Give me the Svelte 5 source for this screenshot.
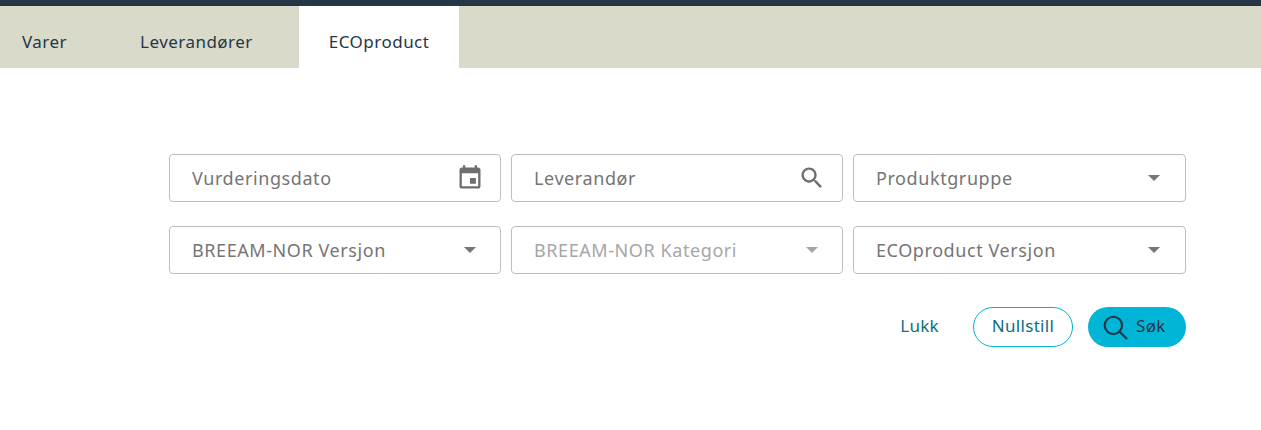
<script>
  const tabs = [
    { label: 'Varer' },
    { label: 'Leverandører' },
    { label: 'ECOproduct', active: true }
  ];
  const fields = [
    { label: 'Vurderingsdato', icon: 'date' },
    { label: 'Leverandør', icon: 'search' },
    { label: 'Produktgruppe', icon: 'caret' },
    { label: 'BREEAM-NOR Versjon', icon: 'caret' },
    { label: 'BREEAM-NOR Kategori', icon: 'caret', disabled: true },
    { label: 'ECOproduct Versjon', icon: 'caret' }
  ];
</script>

<div class="page">
  <nav class="tabs">
    {#each tabs as tab}
      <button class="tab" class:active={tab.active}>{tab.label}</button>
    {/each}
  </nav>

  <form class="search" onsubmit={(e) => e.preventDefault()}>
    <div class="grid">
      {#each fields as f}
        <div class="field" class:disabled={f.disabled}>
          <span class="label">{f.label}</span>
          {#if f.icon === 'date'}
            <svg class="icon" viewBox="0 0 24 24" width="28" height="28"><path d="M17 12h-5v5h5v-5zM16 1v2H8V1H6v2H5c-1.11 0-1.99.9-1.99 2L3 19c0 1.1.89 2 2 2h14c1.1 0 2-.9 2-2V5c0-1.1-.9-2-2-2h-1V1h-2zm3 18H5V8h14v11z"/></svg>
          {:else if f.icon === 'search'}
            <svg class="icon" viewBox="0 0 24 24" width="28" height="28"><path d="M15.5 14h-.79l-.28-.27C15.41 12.59 16 11.11 16 9.5 16 5.91 13.09 3 9.5 3S3 5.91 3 9.5 5.91 16 9.5 16c1.61 0 3.09-.59 4.23-1.57l.27.28v.79l5 4.99L20.49 19l-4.99-5zm-6 0C7.01 14 5 11.99 5 9.5S7.01 5 9.5 5 14 7.01 14 9.5 11.99 14 9.5 14z"/></svg>
          {:else}
            <span class="caret"></span>
          {/if}
        </div>
      {/each}
    </div>

    <div class="actions">
      <button type="button" class="btn link">Lukk</button>
      <button type="button" class="btn outline">Nullstill</button>
      <button type="submit" class="btn primary">
        <svg viewBox="0 0 24 24" width="26" height="26" fill="none" stroke="#253746" stroke-width="2"><circle cx="10.5" cy="10.5" r="8"/><path d="M16.3 16.3 22.5 22.5" stroke-linecap="round"/></svg>
        <span>Søk</span>
      </button>
    </div>
  </form>
</div>

<style>
  :global(body) {
    margin: 0;
    background: #fff;
  }
  .page {
    font-family: "Noto Sans", sans-serif;
    color: #253746;
    border-top: 6px solid #253746;
    min-height: 424px;
  }
  button {
    font: inherit;
    border: 0;
    background: none;
    cursor: pointer;
  }
  .tabs {
    display: flex;
    gap: 16px;
    height: 62px;
    background: #dadacb;
  }
  .tab {
    padding: 8px 30px 0;
    font-size: 17px;
    letter-spacing: 0.47px;
    color: #253746;
  }
  .tab:first-child {
    padding: 8px 27px 0 22px;
  }
  .tab.active {
    background: #fff;
  }
  .search {
    width: 1017px;
    margin: 86px 0 0 169px;
  }
  .grid {
    display: grid;
    grid-template-columns: 332px 332px 333px;
    gap: 24px 10px;
  }
  .field {
    box-sizing: border-box;
    height: 48px;
    padding: 0 16px 0 22px;
    display: flex;
    align-items: center;
    justify-content: space-between;
    border: 1px solid #bdbdbd;
    border-radius: 4px;
    font-size: 18px;
    letter-spacing: 0.58px;
    color: #757575;
  }
  .field.disabled {
    color: #a6a6a6;
  }
  .icon {
    fill: #6e6e6e;
  }
  .caret {
    width: 0;
    height: 0;
    margin-right: 8px;
    border-left: 6px solid transparent;
    border-right: 6px solid transparent;
    border-top: 6px solid #757575;
  }
  .field:nth-child(3n) .caret {
    margin-right: 9px;
  }
  .disabled .caret {
    border-top-color: #a6a6a6;
  }
  .actions {
    display: flex;
    justify-content: flex-end;
    align-items: center;
    margin-top: 33px;
  }
  .btn {
    box-sizing: border-box;
    height: 40px;
    border-radius: 20px;
    font-size: 17px;
    letter-spacing: 0.3px;
  }
  .link {
    color: #0b6e85;
    margin-right: 34px;
    padding: 0 0 3px;
  }
  .outline {
    width: 100px;
    border: 1px solid #00b5d6;
    color: #0b6e85;
    margin-right: 15px;
    padding: 0 0 3px;
  }
  .primary {
    width: 98px;
    background: #00b5d6;
    color: #253746;
    display: flex;
    align-items: center;
    gap: 8px;
    padding: 0 0 0 14px;
  }
  .primary span {
    padding-bottom: 3px;
  }
</style>
